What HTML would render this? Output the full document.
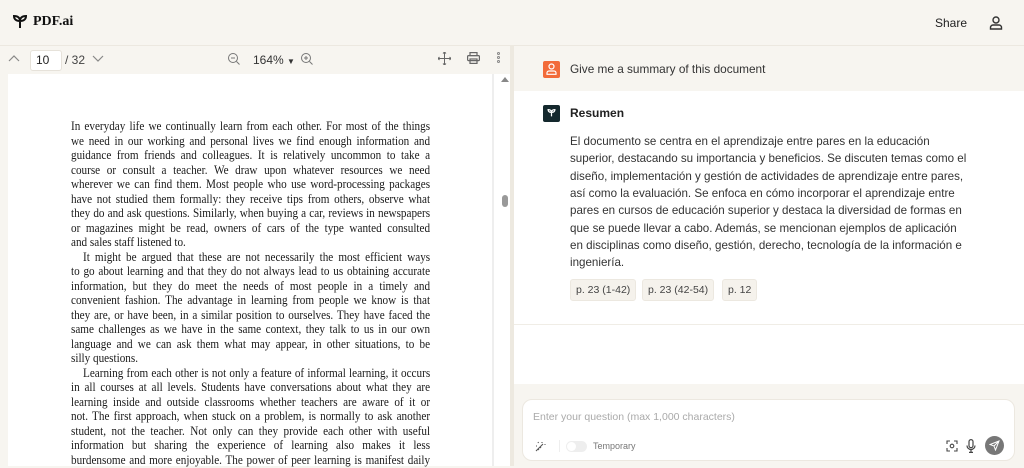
<!DOCTYPE html>
<html><head><meta charset="utf-8"><style>
*{box-sizing:border-box;margin:0;padding:0}
body{width:1024px;height:466px;overflow:hidden;background:#f7f5f0;font-family:"Liberation Sans",sans-serif;position:relative;color:#222}
.abs{position:absolute}
.pdf{left:8px;top:74px;width:484px;height:392px;background:#fff}
.pl{position:absolute;left:71px;width:392px;height:15px;overflow:hidden;font-family:"Liberation Serif",serif;font-size:12.2px;color:#1a1a1a;text-align:justify;text-align-last:justify;line-height:14px;transform:scaleX(0.916);transform-origin:0 0}
.pl.e{text-align-last:left}
.rl{position:absolute;left:570px;font-size:11.6px;color:#333;white-space:nowrap;line-height:17px}
.chip{position:absolute;top:279px;height:22px;background:#f5f2ec;border:1px solid #ece8e0;border-radius:3px;font-size:10.5px;color:#444;line-height:20px;padding:0 5px;white-space:nowrap}
</style></head><body>
<svg class="abs" style="left:12px;top:15px" width="16" height="14" viewBox="0 0 16 14" fill="none" stroke="#111" stroke-width="2"><path d="M8 13V6M8 6C8 3 6 1 2 1C2 4 4 6 8 6ZM8 6C8 3 10 1 14 1C14 4 12 6 8 6Z"/></svg>
<div class="abs" style="left:33px;top:14px;font-family:'Liberation Serif',serif;font-weight:bold;font-size:14px;color:#111">PDF.ai</div>
<div class="abs" style="left:935px;top:16px;font-size:12px;color:#222">Share</div>
<svg class="abs" style="left:988px;top:15px" width="16" height="16" viewBox="0 0 16 16" fill="none" stroke="#333" stroke-width="1.4"><circle cx="8" cy="5" r="3"/><path d="M2.5 14v-1.5a2.5 2.5 0 0 1 2.5-2.5h6a2.5 2.5 0 0 1 2.5 2.5V14z"/></svg>
<div class="abs" style="left:0;top:45px;width:1024px;height:1px;background:#ece8e0"></div>
<svg class="abs" style="left:8px;top:54px" width="12" height="8" viewBox="0 0 12 8" fill="none" stroke="#888" stroke-width="1.2"><path d="M1 7l5-5 5 5"/></svg>
<div class="abs" style="left:30px;top:50px;width:32px;height:21px;background:#fff;border:1px solid #e6e2da;border-radius:3px;font-size:12px;line-height:19px;padding-left:5px">10</div>
<div class="abs" style="left:65px;top:53px;font-size:12px;color:#444">/ 32</div>
<svg class="abs" style="left:92px;top:55px" width="12" height="8" viewBox="0 0 12 8" fill="none" stroke="#888" stroke-width="1.2"><path d="M1 1l5 5 5-5"/></svg>
<svg class="abs" style="left:227px;top:52px" width="13" height="13" viewBox="0 0 13 13" fill="none" stroke="#777" stroke-width="1"><circle cx="6" cy="6" r="4.5"/><path d="M4 6h4M9.5 9.5l3 3"/></svg>
<div class="abs" style="left:253px;top:53px;font-size:12px;color:#333">164% <span style="font-size:8px">▼</span></div>
<svg class="abs" style="left:300px;top:52px" width="13" height="13" viewBox="0 0 13 13" fill="none" stroke="#777" stroke-width="1"><circle cx="6" cy="6" r="4.5"/><path d="M4 6h4M6 4v4M9.5 9.5l3 3"/></svg>
<svg class="abs" style="left:438px;top:52px" width="13" height="13" viewBox="0 0 13 13" fill="none" stroke="#666" stroke-width="1"><path d="M6.5 0v13M0 6.5h13M5 1.5l1.5-1.5 1.5 1.5M5 11.5l1.5 1.5 1.5-1.5M1.5 5L0 6.5 1.5 8M11.5 5L13 6.5 11.5 8"/></svg>
<svg class="abs" style="left:467px;top:52px" width="13" height="12" viewBox="0 0 13 12" fill="none" stroke="#666" stroke-width="1.2"><rect x="3" y="0.6" width="7" height="3"/><rect x="0.6" y="3.6" width="11.8" height="5" rx="1"/><rect x="3" y="7" width="7" height="4.4"/></svg>
<div class="abs" style="left:497px;top:52px;width:3px;font-size:0">
<div style="width:3px;height:3px;border:1px solid #888;border-radius:50%;margin-bottom:1px"></div><div style="width:3px;height:3px;border:1px solid #888;border-radius:50%;margin-bottom:1px"></div><div style="width:3px;height:3px;border:1px solid #888;border-radius:50%"></div></div>
<div class="abs pdf"></div>
<div class="abs" style="left:492px;top:74px;width:18px;height:392px;background:#fff;border-left:2px solid #eeeeee"></div>
<div class="abs" style="left:501px;top:77px;width:0;height:0;border-left:4px solid transparent;border-right:4px solid transparent;border-bottom:5px solid #888"></div>
<div class="abs" style="left:502px;top:195px;width:6px;height:12px;background:#999;border-radius:3px"></div>
<div class="abs" style="left:510px;top:45px;width:4px;height:421px;background:#ede9e0"></div>
<div class="pl" style="top:119px">In everyday life we continually learn from each other. For most of the things</div>
<div class="pl" style="top:133.5px">we need in our working and personal lives we find enough information and</div>
<div class="pl" style="top:148px">guidance from friends and colleagues. It is relatively uncommon to take a</div>
<div class="pl" style="top:162.5px">course or consult a teacher. We draw upon whatever resources we need</div>
<div class="pl" style="top:177px">wherever we can find them. Most people who use word-processing packages</div>
<div class="pl" style="top:191.5px">have not studied them formally: they receive tips from others, observe what</div>
<div class="pl" style="top:206px">they do and ask questions. Similarly, when buying a car, reviews in newspapers</div>
<div class="pl" style="top:220.5px">or magazines might be read, owners of cars of the type wanted consulted</div>
<div class="pl e" style="top:235px">and sales staff listened to.</div>
<div class="pl" style="top:249.5px;left:83px;width:379px">It might be argued that these are not necessarily the most efficient ways</div>
<div class="pl" style="top:264px">to go about learning and that they do not always lead to us obtaining accurate</div>
<div class="pl" style="top:278.5px">information, but they do meet the needs of most people in a timely and</div>
<div class="pl" style="top:293px">convenient fashion. The advantage in learning from people we know is that</div>
<div class="pl" style="top:307.5px">they are, or have been, in a similar position to ourselves. They have faced the</div>
<div class="pl" style="top:322px">same challenges as we have in the same context, they talk to us in our own</div>
<div class="pl" style="top:336.5px">language and we can ask them what may appear, in other situations, to be</div>
<div class="pl e" style="top:351px">silly questions.</div>
<div class="pl" style="top:365.5px;left:83px;width:379px">Learning from each other is not only a feature of informal learning, it occurs</div>
<div class="pl" style="top:380px">in all courses at all levels. Students have conversations about what they are</div>
<div class="pl" style="top:394.5px">learning inside and outside classrooms whether teachers are aware of it or</div>
<div class="pl" style="top:409px">not. The first approach, when stuck on a problem, is normally to ask another</div>
<div class="pl" style="top:423.5px">student, not the teacher. Not only can they provide each other with useful</div>
<div class="pl" style="top:438px">information but sharing the experience of learning also makes it less</div>
<div class="pl" style="top:452.5px">burdensome and more enjoyable. The power of peer learning is manifest daily</div>
<div class="abs" style="left:514px;top:46px;width:510px;height:45px;background:#f7f5f0"></div>
<div class="abs" style="left:514px;top:91px;width:510px;height:293px;background:#fff"></div>
<div class="abs" style="left:514px;top:324px;width:510px;height:1px;background:#f0ede6"></div>
<div class="abs" style="left:543px;top:61px;width:17px;height:17px;background:#f26b3a;border-radius:2px"></div>
<svg class="abs" style="left:546px;top:63px" width="11" height="12" viewBox="0 0 11 12" fill="none" stroke="#fff" stroke-width="1.2"><circle cx="5.5" cy="3.5" r="2.5"/><path d="M1 11.3V10a2 2 0 0 1 2-2h5a2 2 0 0 1 2 2v1.3z"/></svg>
<div class="abs" style="left:570px;top:62px;font-size:11.8px;color:#333">Give me a summary of this document</div>
<div class="abs" style="left:543px;top:105px;width:17px;height:17px;background:#14282d;border-radius:2px"></div>
<svg class="abs" style="left:547px;top:109px" width="9" height="8" viewBox="0 0 16 14" fill="none" stroke="#fff" stroke-width="2.2"><path d="M8 13V6M8 6C8 3 6 1 2 1C2 4 4 6 8 6ZM8 6C8 3 10 1 14 1C14 4 12 6 8 6Z"/></svg>
<div class="abs" style="left:570px;top:106px;font-size:12px;font-weight:bold;color:#222">Resumen</div>
<div class="rl" style="top:133px">El documento se centra en el aprendizaje entre pares en la educación</div>
<div class="rl" style="top:150.3px">superior, destacando su importancia y beneficios. Se discuten temas como el</div>
<div class="rl" style="top:167.6px">diseño, implementación y gestión de actividades de aprendizaje entre pares,</div>
<div class="rl" style="top:184.9px">así como la evaluación. Se enfoca en cómo incorporar el aprendizaje entre</div>
<div class="rl" style="top:202.2px">pares en cursos de educación superior y destaca la diversidad de formas en</div>
<div class="rl" style="top:219.5px">que se puede llevar a cabo. Además, se mencionan ejemplos de aplicación</div>
<div class="rl" style="top:236.8px">en disciplinas como diseño, gestión, derecho, tecnología de la información e</div>
<div class="rl" style="top:254.1px">ingeniería.</div>
<div class="chip" style="left:570px">p. 23 (1-42)</div>
<div class="chip" style="left:642px">p. 23 (42-54)</div>
<div class="chip" style="left:722px">p. 12</div>
<div class="abs" style="left:522px;top:399px;width:493px;height:62px;background:#fff;border:1px solid #ece8e0;border-radius:10px"></div>
<div class="abs" style="left:533px;top:411px;font-size:10.5px;color:#aaa">Enter your question (max 1,000 characters)</div>
<svg class="abs" style="left:535px;top:441px" width="11" height="11" viewBox="0 0 11 11" fill="none" stroke="#555" stroke-width="1.1"><path d="M1 10l7-7M7 1v1M9.5 3.5h1M3 1l.5 1M1 5h1"/><path d="M3 8l1 1M5 6l1 1" /></svg>
<div class="abs" style="left:559px;top:440px;width:1px;height:12px;background:#eee"></div>
<div class="abs" style="left:566px;top:441px;width:21px;height:11px;background:#eee;border-radius:6px"></div>
<div class="abs" style="left:567px;top:442px;width:9px;height:9px;background:#fff;border-radius:50%"></div>
<div class="abs" style="left:593px;top:441px;font-size:9px;color:#777">Temporary</div>
<svg class="abs" style="left:946px;top:440px" width="12" height="12" viewBox="0 0 12 12" fill="none" stroke="#444" stroke-width="1.1"><path d="M1 4V1h3M8 1h3v3M11 8v3H8M4 11H1V8"/><circle cx="6" cy="6" r="1.8"/></svg>
<svg class="abs" style="left:966px;top:439px" width="10" height="14" viewBox="0 0 10 14" fill="none" stroke="#444" stroke-width="1.2"><rect x="3" y="0.6" width="4" height="8" rx="2"/><path d="M1 6.5a4 4 0 0 0 8 0M5 10.5v3M3 13.4h4"/></svg>
<div class="abs" style="left:985px;top:436px;width:19px;height:19px;background:#777;border-radius:50%"></div>
<svg class="abs" style="left:989px;top:440px" width="11" height="11" viewBox="0 0 11 11" fill="none" stroke="#fff" stroke-width="1"><path d="M10 1L1 4.5l4 1.5 1.5 4z M10 1L5 6"/></svg>
</body></html>
